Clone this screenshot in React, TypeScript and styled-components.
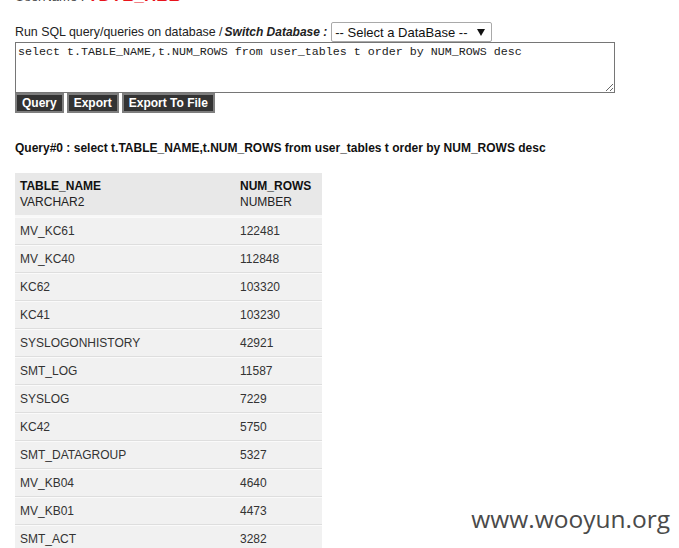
import React from "react";
import styled, { createGlobalStyle } from "styled-components";

const Global = createGlobalStyle`
  html, body { margin: 0; padding: 0; background: #fff; }
  body { font-family: "Liberation Sans", Arial, sans-serif; color: #222; overflow: hidden; }
`;

const Page = styled.div`
  position: relative;
  width: 679px;
  height: 548px;
  overflow: hidden;
  padding-left: 15px;
  box-sizing: border-box;
`;

const UserLine = styled.div`
  margin-top: -11px;
  height: 14px;
  font-size: 13px;
  line-height: 14px;
  color: #444;
  white-space: nowrap;
`;

const UserName = styled.span`
  color: #e8141c;
  font-weight: bold;
  font-style: italic;
  font-size: 17px;
`;

const SwitchLine = styled.div`
  margin-top: 19px;
  display: flex;
  align-items: center;
  height: 20px;
  font-size: 12.4px;
  white-space: nowrap;
`;

const SwitchLabel = styled.b`
  font-style: italic;
  font-size: 12px;
  margin: 0 4px 0 2px;
`;

const SelectWrap = styled.div`
  position: relative;
  width: 161px;
  height: 20px;
`;

const Select = styled.select`
  appearance: none;
  -webkit-appearance: none;
  width: 161px;
  height: 20px;
  box-sizing: border-box;
  border: 1px solid #a9a9a9;
  border-radius: 2px;
  background: #fff;
  font-family: "Liberation Sans", Arial, sans-serif;
  font-size: 13px;
  color: #111;
  padding: 0 0 0 3px;
  margin: 0;
  outline: none;
`;

const Arrow = styled.svg`
  position: absolute;
  right: 7px;
  top: 7px;
  pointer-events: none;
`;

const Editor = styled.textarea`
  display: block;
  width: 600px;
  height: 51px;
  box-sizing: border-box;
  margin: 0;
  border: 1px solid #767676;
  padding: 3px 2px;
  font-family: "Liberation Mono", "Courier New", monospace;
  font-size: 11.67px;
  line-height: 13px;
  color: #222;
  resize: both;
  outline: none;
`;

const ButtonRow = styled.div`
  display: flex;
  gap: 3px;
  margin-top: 0;
`;

const Button = styled.button`
  height: 20px;
  box-sizing: border-box;
  padding: 0 5px;
  margin: 0;
  border: 2px solid #7e7e7e;
  background: #333;
  color: #fff;
  font-family: "Liberation Sans", Arial, sans-serif;
  font-size: 12px;
  font-weight: bold;
  line-height: 16px;
  cursor: pointer;
`;

const QueryTitle = styled.div`
  margin-top: 27px;
  font-size: 12px;
  font-weight: bold;
  line-height: 16px;
  color: #111;
  white-space: nowrap;
`;

const Table = styled.table`
  margin-top: 17px;
  width: 307px;
  border-collapse: separate;
  border-spacing: 0;
  font-size: 12px;
`;

const HeadCell = styled.th<{ $w: number }>`
  width: ${(p) => p.$w}px;
  text-align: left;
  vertical-align: top;
  background: #e8e8e8;
  padding: 5px 5px;
  line-height: 16px;
  font-weight: normal;
  color: #222;
  border-bottom: 2px solid #f8f8f8;
`;

const HeadName = styled.div`
  font-weight: bold;
  color: #111;
`;

const Cell = styled.td`
  background: #f1f1f1;
  padding: 5px 5px;
  line-height: 16px;
  color: #333;
  border-top: 1px solid #fafafa;
  border-bottom: 1px solid #dedede;
`;

const Watermark = styled.div`
  position: absolute;
  right: 9px;
  bottom: 15px;
  font-family: "Open Sans", "Noto Sans", sans-serif;
  font-size: 24.5px;
  line-height: 28px;
  color: #4a4a4a;
`;

const rows: [string, number][] = [
  ["MV_KC61", 122481],
  ["MV_KC40", 112848],
  ["KC62", 103320],
  ["KC41", 103230],
  ["SYSLOGONHISTORY", 42921],
  ["SMT_LOG", 11587],
  ["SYSLOG", 7229],
  ["KC42", 5750],
  ["SMT_DATAGROUP", 5327],
  ["MV_KB04", 4640],
  ["MV_KB01", 4473],
  ["SMT_ACT", 3282],
  ["SMT_ROLE", 3001],
];

const sql =
  "select t.TABLE_NAME,t.NUM_ROWS from user_tables t order by NUM_ROWS desc";

export default function App() {
  return (
    <>
      <Global />
      <Page>
        <UserLine>
          UserName : <UserName>YDYB_HBB</UserName>
        </UserLine>
        <SwitchLine>
          Run SQL query/queries on database /<SwitchLabel>Switch Database :</SwitchLabel>
          <SelectWrap>
            <Select defaultValue="">
              <option value="">-- Select a DataBase --</option>
            </Select>
            <Arrow width="8" height="7" viewBox="0 0 8 7">
              <path d="M0 0 H8 L4 7 Z" fill="#111" />
            </Arrow>
          </SelectWrap>
        </SwitchLine>
        <Editor defaultValue={sql} spellCheck={false} />
        <ButtonRow>
          <Button>Query</Button>
          <Button>Export</Button>
          <Button>Export To File</Button>
        </ButtonRow>
        <QueryTitle>Query#0 : {sql}</QueryTitle>
        <Table>
          <thead>
            <tr>
              <HeadCell $w={210}>
                <HeadName>TABLE_NAME</HeadName>
                VARCHAR2
              </HeadCell>
              <HeadCell $w={77}>
                <HeadName>NUM_ROWS</HeadName>
                NUMBER
              </HeadCell>
            </tr>
          </thead>
          <tbody>
            {rows.map(([name, n]) => (
              <tr key={name}>
                <Cell>{name}</Cell>
                <Cell>{n}</Cell>
              </tr>
            ))}
          </tbody>
        </Table>
        <Watermark>www.wooyun.org</Watermark>
      </Page>
    </>
  );
}
